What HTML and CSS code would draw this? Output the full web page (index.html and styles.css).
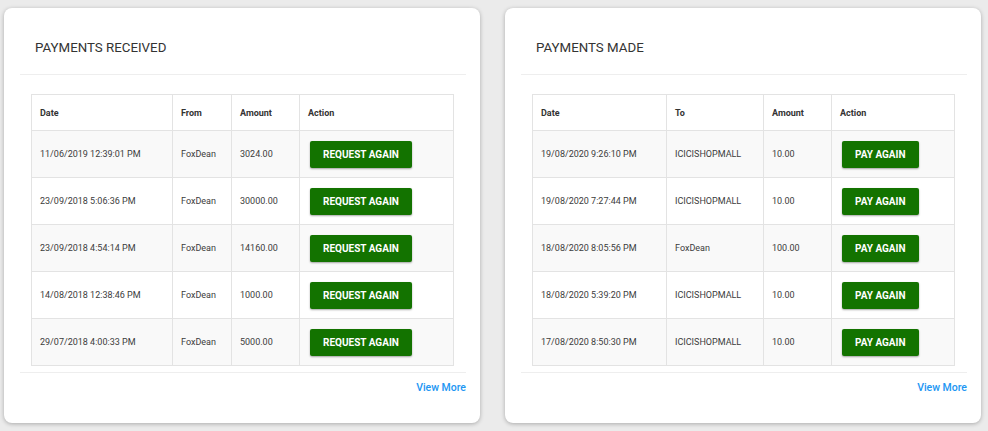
FILE: index.html
```html
<!DOCTYPE html>
<html>
<head>
<meta charset="utf-8">
<link rel="stylesheet" href="styles.css">
</head>
<body>
<div class="page">
  <section class="card">
    <div class="card-head"><h2 class="title">PAYMENTS RECEIVED</h2></div>
    <div class="card-body">
      <table class="grid grid-received">
        <colgroup><col class="c1"><col class="c2"><col class="c3"><col class="c4"></colgroup>
        <thead><tr><th>Date</th><th>From</th><th>Amount</th><th>Action</th></tr></thead>
        <tbody>
          <tr><td>11/06/2019 12:39:01 PM</td><td>FoxDean</td><td>3024.00</td><td class="act"><button class="btn">REQUEST AGAIN</button></td></tr>
          <tr><td>23/09/2018 5:06:36 PM</td><td>FoxDean</td><td>30000.00</td><td class="act"><button class="btn">REQUEST AGAIN</button></td></tr>
          <tr><td>23/09/2018 4:54:14 PM</td><td>FoxDean</td><td>14160.00</td><td class="act"><button class="btn">REQUEST AGAIN</button></td></tr>
          <tr><td>14/08/2018 12:38:46 PM</td><td>FoxDean</td><td>1000.00</td><td class="act"><button class="btn">REQUEST AGAIN</button></td></tr>
          <tr><td>29/07/2018 4:00:33 PM</td><td>FoxDean</td><td>5000.00</td><td class="act"><button class="btn">REQUEST AGAIN</button></td></tr>
        </tbody>
      </table>
    </div>
    <div class="card-foot"><a class="more" href="#">View More</a></div>
  </section>
  <section class="card">
    <div class="card-head"><h2 class="title">PAYMENTS MADE</h2></div>
    <div class="card-body">
      <table class="grid grid-made">
        <colgroup><col class="c1"><col class="c2"><col class="c3"><col class="c4"></colgroup>
        <thead><tr><th>Date</th><th>To</th><th>Amount</th><th>Action</th></tr></thead>
        <tbody>
          <tr><td>19/08/2020 9:26:10 PM</td><td>ICICISHOPMALL</td><td>10.00</td><td class="act"><button class="btn">PAY AGAIN</button></td></tr>
          <tr><td>19/08/2020 7:27:44 PM</td><td>ICICISHOPMALL</td><td>10.00</td><td class="act"><button class="btn">PAY AGAIN</button></td></tr>
          <tr><td>18/08/2020 8:05:56 PM</td><td>FoxDean</td><td>100.00</td><td class="act"><button class="btn">PAY AGAIN</button></td></tr>
          <tr><td>18/08/2020 5:39:20 PM</td><td>ICICISHOPMALL</td><td>10.00</td><td class="act"><button class="btn">PAY AGAIN</button></td></tr>
          <tr><td>17/08/2020 8:50:30 PM</td><td>ICICISHOPMALL</td><td>10.00</td><td class="act"><button class="btn">PAY AGAIN</button></td></tr>
        </tbody>
      </table>
    </div>
    <div class="card-foot"><a class="more" href="#">View More</a></div>
  </section>
</div>
</body>
</html>
```

FILE: styles.css
```css
* { box-sizing: border-box; }
html, body { margin: 0; padding: 0; }
body {
  background: #ebebeb;
  font-family: Roboto, "Liberation Sans", Arial, sans-serif;
  color: #333;
  width: 988px;
  height: 431px;
  overflow: hidden;
}
.page {
  display: flex;
  gap: 25px;
  padding: 8px 0 0 4px;
}
.card {
  width: 476px;
  height: 415px;
  background: #fff;
  border-radius: 8px;
  box-shadow: 0 1px 4px rgba(0,0,0,0.28);
  padding: 0 14px 0 16px;
}
.card-head {
  padding: 30px 0 16px 15px;
  border-bottom: 1px solid #eeeeee;
}
.title {
  margin: 0;
  font-size: 13.3px;
  line-height: 20px;
  font-weight: 400;
  color: #333;
}
.card-body {
  padding: 19px 12px 6px 11px;
}
.grid {
  width: 100%;
  border-collapse: collapse;
  table-layout: fixed;
  font-size: 9px;
  border: 1px solid #dedede;
}
.grid-received .c1 { width: 141px; }
.grid-received .c2 { width: 59px; }
.grid-received .c3 { width: 68px; }
.grid-received .c4 { width: auto; }
.grid-made .c1 { width: 134px; }
.grid-made .c2 { width: 97px; }
.grid-made .c3 { width: 68px; }
.grid-made .c4 { width: auto; }
.grid th, .grid td {
  border: 1px solid #e3e3e3;
  text-align: left;
  padding: 0 8px;
  vertical-align: middle;
  white-space: nowrap;
}
.grid th {
  height: 36px;
  font-weight: 700;
  color: #333;
  background: #fff;
}
.grid td {
  height: 47px;
  color: #3c3c3c;
}
.grid tbody tr:nth-child(odd) td { background: #f9f9f9; }
.grid tbody tr:nth-child(even) td { background: #fff; }
.grid td.act { padding-left: 10px; }
.btn {
  display: inline-block;
  height: 27px;
  padding: 0 13px;
  border: none;
  border-radius: 2px;
  background: #137300;
  color: #fff;
  font-family: Roboto, "Liberation Sans", Arial, sans-serif;
  font-size: 10px;
  font-weight: 700;
  box-shadow: 0 1px 2px rgba(0,0,0,0.35);
  cursor: pointer;
}
.card-foot {
  border-top: 1px solid #eeeeee;
  text-align: right;
  padding-top: 8px;
  line-height: 14px;
}
.more {
  font-size: 10.5px;
  font-weight: 500;
  line-height: 14px;
  color: #2196f3;
  text-decoration: none;
  display: inline-block;
  vertical-align: top;
}
```
